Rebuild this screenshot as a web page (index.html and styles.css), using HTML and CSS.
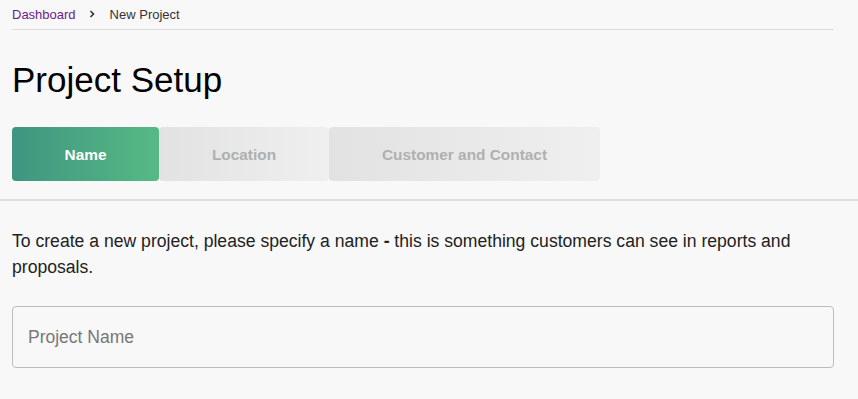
FILE: index.html
```html
<!DOCTYPE html>
<html>
<head>
<meta charset="utf-8">
<link rel="stylesheet" href="styles.css">
</head>
<body>
<div class="top">
  <nav class="crumbs">
    <a class="crumb-link" href="#">Dashboard</a>
    <svg class="chev" width="8" height="8" viewBox="0 0 8 8"><path d="M2.5 1 L5.5 4 L2.5 7" fill="none" stroke="#333" stroke-width="1.6"/></svg>
    <span class="crumb-current">New Project</span>
  </nav>
  <h1 class="title">Project Setup</h1>
  <div class="steps">
    <div class="step step-active step-name">Name</div>
    <div class="step step-location">Location</div>
    <div class="step step-customer">Customer and Contact</div>
  </div>
</div>
<hr class="divider">
<div class="content">
  <p class="intro">To create a new project, please specify a name <b>-</b> this is something customers can see in reports and proposals.</p>
  <input class="name-input" type="text" placeholder="Project Name">
</div>
</body>
</html>
```
FILE: styles.css
```css
html, body {
  margin: 0;
  padding: 0;
  background: #f8f8f8;
  font-family: "Liberation Sans", Arial, sans-serif;
  color: #222;
}
.top {
  padding: 0 24px 0 12px;
}
.crumbs {
  display: flex;
  align-items: center;
  height: 30px;
  border-bottom: 1px solid #dcdcdc;
  font-size: 13px;
  box-sizing: border-box;
  padding-bottom: 1px;
}
.crumb-link {
  color: #6a1b8a;
  text-decoration: none;
}
.chev {
  margin: 0 14px 0 12px;
}
.crumb-current {
  color: #333;
}
.title {
  margin: 30px 0 0;
  font-size: 35px;
  font-weight: normal;
  color: #000;
  line-height: 40px;
}
.steps {
  display: flex;
  margin-top: 27px;
  height: 54px;
}
.step {
  display: flex;
  align-items: center;
  justify-content: center;
  box-sizing: border-box;
  padding-top: 2px;
  font-size: 15.4px;
  font-weight: bold;
  color: #b0b0b0;
  border-radius: 4px;
  background: linear-gradient(90deg, #e2e2e2, #efefef);
}
.step-active {
  color: #fff;
  background: linear-gradient(90deg, #3f9580, #56b985);
}
.step-name { width: 147px; }
.step-location { width: 170px; }
.step-customer { width: 271px; }
.divider {
  margin: 18px 0 0;
  border: 0;
  height: 2px;
  background: #dedede;
}
.content {
  padding: 0 24px 0 12px;
}
.intro {
  margin: 27px 0 0;
  font-size: 17.6px;
  line-height: 26px;
  color: #222;
}
.name-input {
  display: block;
  box-sizing: border-box;
  width: 100%;
  height: 62px;
  margin-top: 26px;
  padding: 0 15px;
  border: 1px solid #bcbcbc;
  border-radius: 4px;
  background: #f8f8f8;
  font-family: "Liberation Sans", Arial, sans-serif;
  font-size: 17.5px;
  color: #333;
  outline: none;
}
.name-input::placeholder {
  color: #777;
}
```
